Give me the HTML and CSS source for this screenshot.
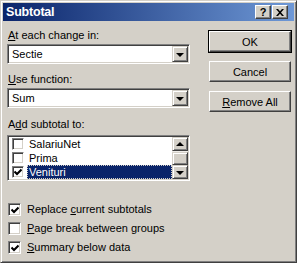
FILE: index.html
```html
<!DOCTYPE html>
<html>
<head>
<meta charset="utf-8">
<link rel="stylesheet" href="styles.css">
</head>
<body>
<div class="window">
  <div class="titlebar">
    <span class="title">Subtotal</span>
    <div class="caption-btns">
      <span class="cbtn help">?</span>
      <span class="cbtn close"><svg width="8" height="7" viewBox="0 0 8 7"><path d="M0 0h2l2 2.2L6 0h2L5 3.5 8 7H6L4 4.8 2 7H0l3-3.5z" fill="#000"/></svg></span>
    </div>
  </div>
  <div class="content">
    <div class="left">
      <div class="label l1"><u>A</u>t each change in:</div>
      <div class="combo">
        <span class="value">Sectie</span>
        <span class="drop"><i class="arrow"></i></span>
      </div>
      <div class="label l2"><u>U</u>se function:</div>
      <div class="combo">
        <span class="value">Sum</span>
        <span class="drop"><i class="arrow"></i></span>
      </div>
      <div class="label l3">A<u>d</u>d subtotal to:</div>
      <div class="list">
        <div class="rows">
          <div class="row"><span class="chk small"></span><span class="text">SalariuNet</span></div>
          <div class="row"><span class="chk small"></span><span class="text">Prima</span></div>
          <div class="row"><span class="chk small checked"><svg width="8" height="8" viewBox="0 0 8 8"><path d="M0.5 3.5 L3 6 L7.5 1.5" stroke="#000" stroke-width="2" fill="none"/></svg></span><span class="text selected">Venituri</span></div>
        </div>
        <div class="scrollbar">
          <span class="sbtn"><i class="arrow up"></i></span>
          <span class="track"><span class="thumb"></span></span>
          <span class="sbtn"><i class="arrow"></i></span>
        </div>
      </div>
      <div class="options">
        <div class="opt"><span class="chk checked"><svg width="8" height="8" viewBox="0 0 8 8"><path d="M0.5 3.5 L3 6 L7.5 1.5" stroke="#000" stroke-width="2" fill="none"/></svg></span><span>Replace <u>c</u>urrent subtotals</span></div>
        <div class="opt"><span class="chk"></span><span><u>P</u>age break between groups</span></div>
        <div class="opt"><span class="chk checked"><svg width="8" height="8" viewBox="0 0 8 8"><path d="M0.5 3.5 L3 6 L7.5 1.5" stroke="#000" stroke-width="2" fill="none"/></svg></span><span><u>S</u>ummary below data</span></div>
      </div>
    </div>
    <div class="right">
      <div class="btn default"><span class="face">OK</span></div>
      <div class="btn"><span class="face">Cancel</span></div>
      <div class="btn"><span class="face"><u>R</u>emove All</span></div>
    </div>
  </div>
</div>
</body>
</html>
```

FILE: styles.css
```css
* { box-sizing: border-box; }
html, body { margin: 0; padding: 0; background: #d4d0c8; }
body {
  font-family: "Liberation Sans", Arial, sans-serif;
  font-size: 11px;
  color: #000;
}
.window {
  width: 297px;
  height: 263px;
  background: #d4d0c8;
  border: 1px solid;
  border-color: #d4d0c8 #404040 #404040 #d4d0c8;
  box-shadow: inset 1px 1px #fff, inset -1px -1px #808080;
  padding: 2px;
  display: flex;
  flex-direction: column;
}
.titlebar {
  height: 18px;
  background: linear-gradient(to right, #0a246a, #6e98d6);
  display: flex;
  align-items: center;
  justify-content: space-between;
  padding: 0 6px 0 3px;
}
.title {
  color: #fff;
  font-weight: bold;
  font-size: 12.5px;
  letter-spacing: -0.2px;
}
.caption-btns { display: flex; gap: 1px; }
.cbtn {
  width: 16px;
  height: 14px;
  background: #d4d0c8;
  border: 1px solid;
  border-color: #fff #404040 #404040 #fff;
  box-shadow: inset -1px -1px #808080;
  display: flex;
  align-items: center;
  justify-content: center;
  font-weight: bold;
  font-size: 11px;
  line-height: 1;
}
.content {
  display: flex;
  padding-left: 4px;
}
.left {
  width: 183px;
  display: flex;
  flex-direction: column;
}
.label {
  line-height: 13px;
  padding-left: 1px;
  margin-bottom: 2px;
}
.l1 { margin-top: 8px; }
.l2 { margin-top: 9px; }
.l3 { margin-top: 10px; }
.combo {
  height: 20px;
  background: #fff;
  border: 1px solid;
  border-color: #808080 #fff #fff #808080;
  box-shadow: inset 1px 1px #404040, inset -1px -1px #d4d0c8;
  padding: 1px;
  display: flex;
  align-items: stretch;
}
.combo .value {
  flex: 1;
  padding-left: 3px;
  line-height: 16px;
}
.drop, .sbtn {
  width: 16px;
  background: #d4d0c8;
  border: 1px solid;
  border-color: #d4d0c8 #404040 #404040 #d4d0c8;
  box-shadow: inset 1px 1px #fff, inset -1px -1px #808080;
  display: flex;
  align-items: center;
  justify-content: center;
}
.arrow {
  width: 0;
  height: 0;
  border-left: 4px solid transparent;
  border-right: 4px solid transparent;
  border-top: 4px solid #000;
  margin-top: 1px;
}
.arrow.up {
  border-top: 0;
  border-bottom: 4px solid #000;
  margin-top: -1px;
}
.list {
  margin-top: 2px;
  height: 46px;
  background: #fff;
  border: 1px solid;
  border-color: #808080 #fff #fff #808080;
  box-shadow: inset 1px 1px #404040, inset -1px -1px #d4d0c8;
  padding: 1px;
  display: flex;
}
.rows { flex: 1; display: flex; flex-direction: column; }
.row {
  height: 14px;
  display: flex;
  align-items: center;
  padding-left: 3px;
}
.row .text {
  margin-left: 3px;
  padding: 0 2px;
  line-height: 14px;
  height: 14px;
}
.row .text.selected {
  flex: 1;
  background: #0a246a;
  color: #fff;
  outline: 1px dotted #d4d0c8;
  outline-offset: -1px;
}
.scrollbar {
  width: 16px;
  display: flex;
  flex-direction: column;
}
.scrollbar .sbtn { height: 14px; width: 16px; }
.track {
  flex: 1;
  background: #eeece8;
  padding-top: 1px;
  display: flex;
  flex-direction: column;
}
.thumb {
  flex: 1;
  background: #d4d0c8;
  border: 1px solid;
  border-color: #d4d0c8 #404040 #404040 #d4d0c8;
  box-shadow: inset 1px 1px #fff, inset -1px -1px #808080;
}
.chk {
  width: 13px;
  height: 13px;
  flex: none;
  background: #fff;
  border: 1px solid;
  border-color: #808080 #fff #fff #808080;
  box-shadow: inset 1px 1px #404040, inset -1px -1px #d4d0c8;
  display: flex;
  align-items: center;
  justify-content: center;
}
.chk.small { width: 12px; height: 12px; }
.chk svg { display: block; }
.options {
  margin-top: 22px;
  display: flex;
  flex-direction: column;
  gap: 6px;
  padding-left: 1px;
}
.opt {
  height: 13px;
  display: flex;
  align-items: center;
  gap: 6px;
  line-height: 13px;
}
.right {
  margin-left: 18px;
  padding-top: 9px;
  display: flex;
  flex-direction: column;
  gap: 7px;
}
.btn {
  width: 84px;
  height: 23px;
  border: 1px solid transparent;
  display: flex;
}
.btn.default { border-color: #000; }
.btn .face {
  flex: 1;
  background: #d4d0c8;
  border: 1px solid;
  border-color: #fff #404040 #404040 #fff;
  box-shadow: inset -1px -1px #808080;
  display: flex;
  align-items: center;
  justify-content: center;
}
```
